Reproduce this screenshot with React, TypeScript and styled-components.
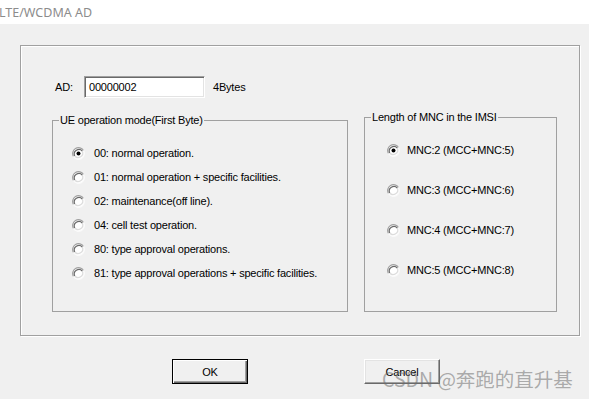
import React from "react";
import styled, { createGlobalStyle } from "styled-components";

const GlobalStyle = createGlobalStyle`
  html, body {
    margin: 0;
    padding: 0;
    background: #f0f0f0;
  }
  body {
    font-family: "Liberation Sans", Arial, sans-serif;
    font-size: 11px;
    color: #000;
  }
`;

const Window = styled.div`
  position: relative;
  width: 589px;
  height: 399px;
  overflow: hidden;
  background: #f0f0f0;
`;

const TitleBar = styled.div`
  height: 24px;
  background: #fff;
  display: flex;
  align-items: center;
  font-family: "Noto Sans", "Open Sans", sans-serif;
  font-size: 12.5px;
  color: #8c8c8c;
  margin-left: -1px;
`;

const Body = styled.div`
  padding: 21px 9px 0 20px;
`;

const Frame = styled.div`
  box-sizing: border-box;
  width: 560px;
  height: 291px;
  border: 1px solid #a0a0a0;
  box-shadow: 1px 1px 0 #fff, inset 1px 1px 0 #fff;
  padding: 30px 0 0 31px;
  display: flex;
  flex-direction: column;
`;

const AdRow = styled.div`
  display: flex;
  align-items: center;
  height: 22px;
  margin-left: 3px;
`;

const AdLabel = styled.span`
  width: 29px;
  letter-spacing: -0.2px;
`;

const TextBox = styled.div`
  box-sizing: border-box;
  width: 121px;
  height: 22px;
  background: #fff;
  border: 1px solid;
  border-color: #a0a0a0 #fff #fff #a0a0a0;
  box-shadow: inset 1px 1px 0 #696969, inset -1px -1px 0 #e3e3e3;
  padding: 0 0 0 4px;
  display: flex;
  align-items: center;
  letter-spacing: -0.2px;
`;

const Unit = styled.span`
  margin-left: 8px;
  letter-spacing: -0.2px;
`;

const Groups = styled.div`
  display: flex;
  align-items: flex-end;
  gap: 16px;
  margin-top: auto;
  margin-bottom: 23px;
`;

const GroupBox = styled.div<{ $w: number; $h: number; $gap: number; $inset: number }>`
  position: relative;
  box-sizing: border-box;
  width: ${(p) => p.$w}px;
  height: ${(p) => p.$h}px;
  border: 1px solid #a0a0a0;
  padding: 20px 0 0 ${(p) => p.$inset}px;
  display: flex;
  flex-direction: column;
  gap: ${(p) => p.$gap}px;
`;

const Caption = styled.span`
  position: absolute;
  top: -7px;
  left: 6px;
  padding: 0 1px;
  background: #f0f0f0;
  line-height: 13px;
  letter-spacing: -0.2px;
`;

const RadioRow = styled.div<{ $textGap: number }>`
  display: flex;
  align-items: center;
  height: 24px;
  gap: ${(p) => p.$textGap}px;
  letter-spacing: -0.2px;
  white-space: nowrap;
`;

const Buttons = styled.div`
  display: flex;
  margin-top: 23px;
  padding-left: 152px;
  gap: 116px;
`;

const Button = styled.div<{ $default?: boolean }>`
  box-sizing: border-box;
  width: 76px;
  height: 25px;
  display: flex;
  align-items: center;
  justify-content: center;
  background: #f0f0f0;
  letter-spacing: -0.2px;
  border: 1px solid;
  border-color: ${(p) => (p.$default ? "#000" : "#fff #696969 #696969 #fff")};
  box-shadow: ${(p) =>
    p.$default
      ? "inset 1px 1px 0 #fff, inset -1px -1px 0 #696969, inset -2px -2px 0 #a0a0a0"
      : "inset -1px -1px 0 #a0a0a0, inset 1px 1px 0 #e3e3e3"};
`;

const Watermark = styled.div`
  position: absolute;
  left: 382px;
  top: 366px;
  font-family: "Noto Sans CJK SC", "Noto Sans", sans-serif;
  font-size: 19.5px;
  line-height: 26px;
  color: rgba(110, 110, 110, 0.55);
  white-space: nowrap;
`;

const Radio = ({ checked }: { checked?: boolean }) => (
  <svg width="13" height="13" viewBox="0 0 13 13">
    <circle cx="6.5" cy="6.5" r="6" fill="#fff" />
    <path d="M11.5 3.5 A5.8 5.8 0 0 0 1.5 9.5" fill="none" stroke="#a0a0a0" strokeWidth="1.2" />
    <path d="M10.3 4 A4.6 4.6 0 0 0 2.7 9" fill="none" stroke="#696969" strokeWidth="1.2" />
    <path d="M1.5 9.5 A5.8 5.8 0 0 0 11.5 3.5" fill="none" stroke="#fafafa" strokeWidth="1.2" />
    <path d="M2.7 9 A4.6 4.6 0 0 0 10.3 4" fill="none" stroke="#dcdcdc" strokeWidth="1.2" />
    {checked && <circle cx="6.5" cy="6.5" r="2" fill="#000" />}
  </svg>
);

const modes = [
  "00: normal operation.",
  "01: normal operation + specific facilities.",
  "02: maintenance(off line).",
  "04: cell test operation.",
  "80: type approval operations.",
  "81: type approval operations + specific facilities.",
];

const mncs = [
  "MNC:2 (MCC+MNC:5)",
  "MNC:3 (MCC+MNC:6)",
  "MNC:4 (MCC+MNC:7)",
  "MNC:5 (MCC+MNC:8)",
];

export default function App() {
  return (
    <Window>
      <GlobalStyle />
      <TitleBar>LTE/WCDMA AD</TitleBar>
      <Body>
        <Frame>
          <AdRow>
            <AdLabel>AD:</AdLabel>
            <TextBox>00000002</TextBox>
            <Unit>4Bytes</Unit>
          </AdRow>
          <Groups>
            <GroupBox $w={296} $h={192} $gap={0} $inset={19}>
              <Caption>UE operation mode(First Byte)</Caption>
              {modes.map((m, i) => (
                <RadioRow key={m} $textGap={9}>
                  <Radio checked={i === 0} />
                  <span>{m}</span>
                </RadioRow>
              ))}
            </GroupBox>
            <GroupBox $w={193} $h={195} $gap={16} $inset={22}>
              <Caption>Length of MNC in the IMSI</Caption>
              {mncs.map((m, i) => (
                <RadioRow key={m} $textGap={7}>
                  <Radio checked={i === 0} />
                  <span>{m}</span>
                </RadioRow>
              ))}
            </GroupBox>
          </Groups>
        </Frame>
        <Buttons>
          <Button $default>OK</Button>
          <Button>Cancel</Button>
        </Buttons>
      </Body>
      <Watermark>CSDN @奔跑的直升基</Watermark>
    </Window>
  );
}
